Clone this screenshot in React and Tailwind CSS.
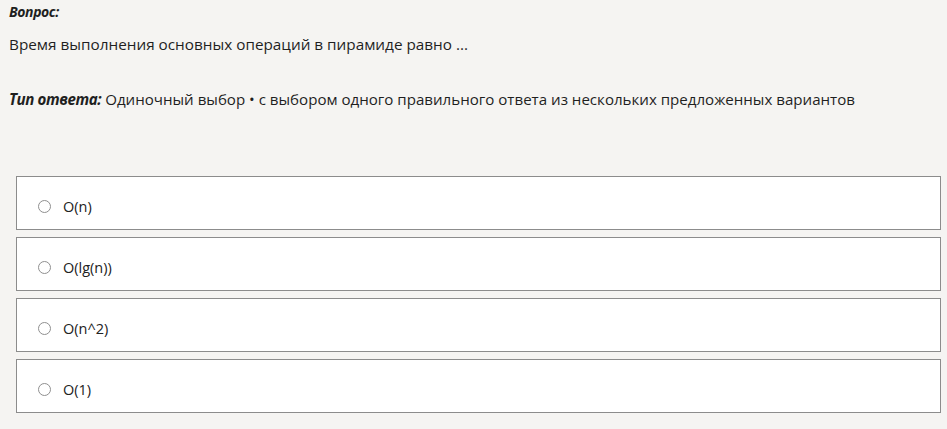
import React from 'react'

const options = ['O(n)', 'O(lg(n))', 'O(n^2)', 'O(1)']

const Option = ({ label }) => (
  <label className="flex h-[54px] items-center border border-[#8c8c8c] bg-white pl-[21px] pt-[7px]">
    <span className="h-[13px] w-[13px] rounded-full border border-[#8f8f8f] bg-white" />
    <span className="ml-[12px] text-[14.5px] text-[#222]">{label}</span>
  </label>
)

const App = () => {
  return (
    <div className="min-h-[429px] bg-[#f5f4f2] px-[9px] pt-[2px] font-['Open_Sans','Noto_Sans',sans-serif] text-[#1f1f1f]">
      <p className="text-[14px] font-bold italic leading-[20px] tracking-[-0.4px]">Вопрос:</p>
      <p className="mt-[12px] text-[15.3px] leading-[20px]">Время выполнения основных операций в пирамиде равно ...</p>

      <p className="mt-[35px] text-[15.1px] leading-[20px]">
        <span className="font-bold italic tracking-[-0.4px]">Тип ответа:</span> Одиночный выбор • с выбором одного правильного ответа из нескольких предложенных вариантов
      </p>

      <div className="ml-[7px] mr-[-3px] mt-[67px] flex flex-col gap-[7px]">
        {options.map(o => (
          <Option key={o} label={o} />
        ))}
      </div>
    </div>
  )
}

export default App
